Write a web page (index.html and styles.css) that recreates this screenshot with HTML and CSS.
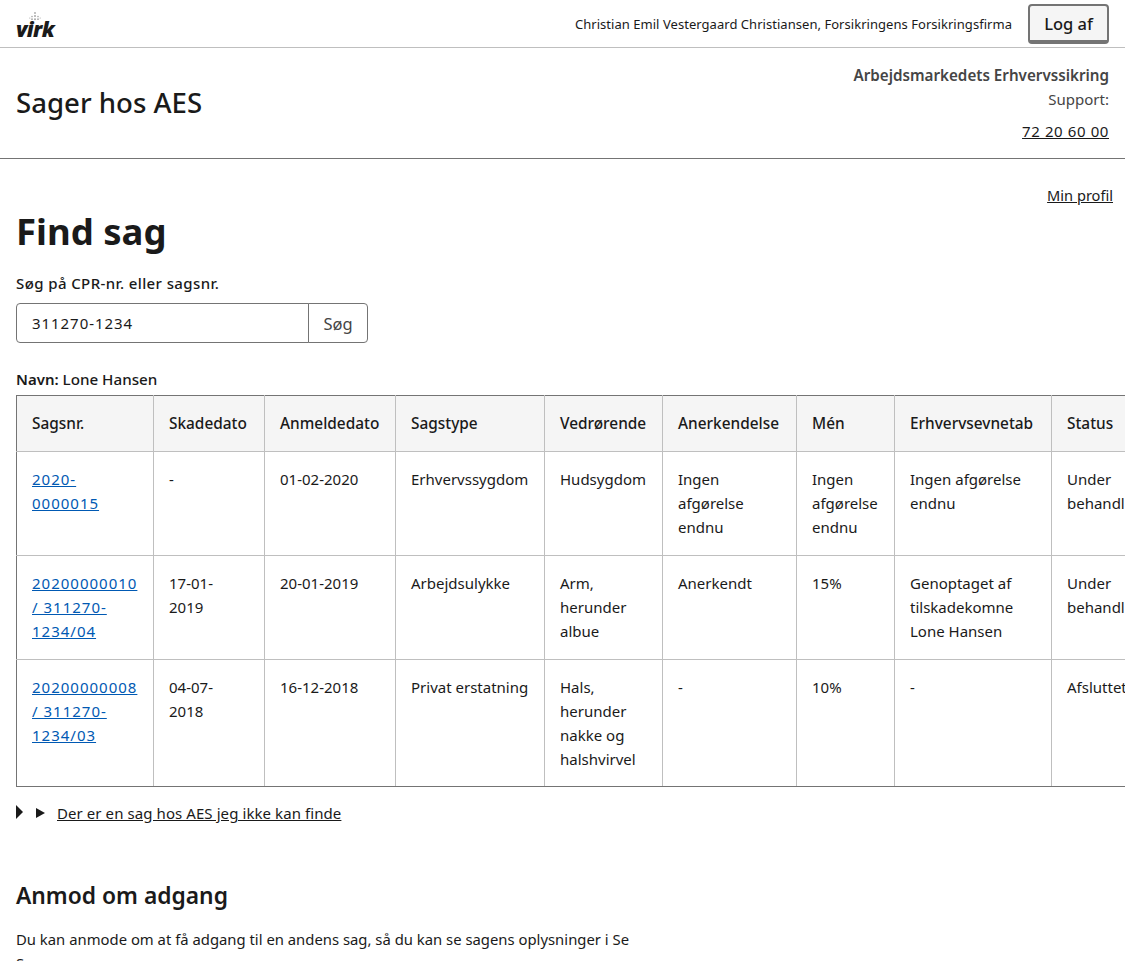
FILE: index.html
```html
<!DOCTYPE html>
<html lang="da">
<head>
    <meta charset="UTF-8">
    <title>Sager hos AES</title>
    <link rel="stylesheet" href="styles.css">
</head>
<body>
    <!-- topbar -->
    <div class="topbar">
        <div class="logo">
            <svg class="crown" width="12" height="9" viewBox="0 0 12 9">
                <circle cx="6" cy="1" r="0.9"/>
                <circle cx="6" cy="4" r="1"/>
                <circle cx="6" cy="7.2" r="1"/>
                <circle cx="3" cy="4.6" r="0.8"/>
                <circle cx="9" cy="4.6" r="0.8"/>
                <circle cx="3" cy="7.2" r="0.9"/>
                <circle cx="9" cy="7.2" r="0.9"/>
                <circle cx="0.8" cy="6" r="0.6"/>
                <circle cx="11.2" cy="6" r="0.6"/>
            </svg>
            <span class="logo-text">virk</span>
        </div>
        <div class="user">
            <span class="user-name">Christian Emil Vestergaard Christiansen, Forsikringens Forsikringsfirma</span>
            <button class="logout">Log af</button>
        </div>
    </div>

    <!-- sidehoved -->
    <div class="site-header">
        <div class="site-title">Sager hos AES</div>
        <div class="support">
            <div class="support-org">Arbejdsmarkedets Erhvervssikring</div>
            <div class="support-label">Support:</div>
            <div class="support-phone"><a href="#">72 20 60 00</a></div>
        </div>
    </div>

    <div class="content">
        <div class="profile-row"><a href="#">Min profil</a></div>
        <h1>Find sag</h1>

        <label class="search-label" for="search">Søg på CPR-nr. eller sagsnr.</label>
        <div class="search">
            <input id="search" class="search-input" type="text" value="311270-1234">
            <button class="search-btn">Søg</button>
        </div>

        <div class="name-line"><b>Navn:</b> Lone Hansen</div>

        <table class="cases">
            <colgroup>
                <col class="c1"><col class="c2"><col class="c3"><col class="c4"><col class="c5">
                <col class="c6"><col class="c7"><col class="c8"><col class="c9">
            </colgroup>
            <thead>
                <tr>
                    <th>Sagsnr.</th>
                    <th>Skadedato</th>
                    <th>Anmeldedato</th>
                    <th>Sagstype</th>
                    <th>Vedrørende</th>
                    <th>Anerkendelse</th>
                    <th>Mén</th>
                    <th>Erhvervsevnetab</th>
                    <th>Status</th>
                </tr>
            </thead>
            <tbody>
                <tr>
                    <td><a class="case-link" href="#">2020-<br>0000015</a></td>
                    <td>-</td>
                    <td>01-02-2020</td>
                    <td>Erhvervssygdom</td>
                    <td>Hudsygdom</td>
                    <td>Ingen<br>afgørelse<br>endnu</td>
                    <td>Ingen<br>afgørelse<br>endnu</td>
                    <td>Ingen afgørelse<br>endnu</td>
                    <td>Under<br>behandling</td>
                </tr>
                <tr>
                    <td><a class="case-link" href="#">20200000010<br>/ 311270-<br>1234/04</a></td>
                    <td>17-01-<br>2019</td>
                    <td>20-01-2019</td>
                    <td>Arbejdsulykke</td>
                    <td>Arm,<br>herunder<br>albue</td>
                    <td>Anerkendt</td>
                    <td>15%</td>
                    <td>Genoptaget af<br>tilskadekomne<br>Lone Hansen</td>
                    <td>Under<br>behandling</td>
                </tr>
                <tr>
                    <td><a class="case-link" href="#">20200000008<br>/ 311270-<br>1234/03</a></td>
                    <td>04-07-<br>2018</td>
                    <td>16-12-2018</td>
                    <td>Privat erstatning</td>
                    <td>Hals,<br>herunder<br>nakke og<br>halshvirvel</td>
                    <td>-</td>
                    <td>10%</td>
                    <td>-</td>
                    <td>Afsluttet</td>
                </tr>
            </tbody>
        </table>

        <div class="missing">
            <span class="tri tri-big"></span>
            <span class="tri tri-small"></span>
            <a href="#">Der er en sag hos AES jeg ikke kan finde</a>
        </div>

        <h2>Anmod om adgang</h2>
        <p class="intro">Du kan anmode om at få adgang til en andens sag, så du kan se sagens oplysninger i Se Sag.</p>
    </div>
</body>
</html>
```

FILE: styles.css
```css
*{
    box-sizing: border-box;
}
html, body{
    height: 961px;
    overflow: hidden;
}
body{
    margin: 0;
    font-family: "Noto Sans", Roboto, sans-serif;
    font-size: 16px;
    line-height: 24px;
    color: #1a1a1a;
    background-color: #fff;
}
a{
    color: inherit;
}

/* topbar */
.topbar{
    height: 48px;
    padding: 4px 16px 0;
    border-bottom: 1px solid #bfbfbf;
    display: flex;
    justify-content: space-between;
}
.logo{
    display: flex;
    flex-direction: column;
    align-items: center;
    width: 38px;
    padding-top: 8px;
}
.crown{
    fill: #a8a8a8;
    flex: none;
}
.logo-text{
    font-family: "Open Sans", sans-serif;
    font-size: 21px;
    font-weight: 800;
    font-style: italic;
    line-height: 16px;
    letter-spacing: -0.6px;
    color: #1a1a1a;
}
.user{
    display: flex;
    align-items: flex-start;
    gap: 16px;
}
.user-name{
    font-size: 13px;
    line-height: 40px;
    letter-spacing: 0.04px;
}
.logout{
    width: 81px;
    height: 40px;
    font-family: inherit;
    font-size: 16.5px;
    font-weight: 500;
    color: #1a1a1a;
    background-color: #f5f5f5;
    border: 2px solid #747474;
    border-bottom-width: 4px;
    border-radius: 4px;
    padding: 0;
}

/* sidehoved */
.site-header{
    height: 111px;
    padding: 15px 16px 0;
    border-bottom: 1px solid #747474;
    display: flex;
    justify-content: space-between;
}
.site-title{
    font-size: 27.6px;
    font-weight: 500;
    line-height: 79px;
}
.support{
    text-align: right;
    font-size: 15px;
    color: #454545;
}
.support-org{
    font-size: 15.2px;
    font-weight: 600;
}
.support-label{
    line-height: 24px;
}
.support-phone{
    margin-top: 8px;
    line-height: 24px;
    letter-spacing: 0.6px;
    color: #1a1a1a;
}

/* indhold */
.content{
    padding: 24px 12px 0 16px;
}
.profile-row{
    text-align: right;
    font-size: 14.6px;
}
h1{
    margin: 0;
    font-size: 36.5px;
    font-weight: 700;
    line-height: 48px;
}
.search-label{
    display: block;
    margin-top: 16px;
    font-size: 15px;
    font-weight: 500;
    letter-spacing: 0.4px;
}
.search{
    display: flex;
    width: 352px;
    height: 40px;
    margin-top: 8px;
}
.search-input{
    width: 293px;
    height: 40px;
    padding: 0 15px;
    font-family: inherit;
    font-size: 15px;
    letter-spacing: 0.95px;
    color: #1a1a1a;
    border: 1px solid #747474;
    border-radius: 4px 0 0 4px;
}
.search-btn{
    flex: 1;
    margin-left: -1px;
    padding: 0;
    font-family: inherit;
    font-size: 16.5px;
    color: #454545;
    background-color: #fff;
    border: 1px solid #747474;
    border-radius: 0 4px 4px 0;
}
.name-line{
    margin-top: 24px;
    margin-bottom: 4px;
    font-size: 15.2px;
    font-weight: 500;
}
.name-line b{
    font-size: 15px;
    font-weight: 600;
}

/* tabel */
.cases{
    table-layout: fixed;
    width: 1230px;
    border-collapse: collapse;
    font-size: 15px;
}
.c1{ width: 137px; }
.c2{ width: 111px; }
.c3{ width: 131px; }
.c4{ width: 149px; }
.c5{ width: 118px; }
.c6{ width: 134px; }
.c7{ width: 98px; }
.c8{ width: 157px; }
.c9{ width: 195px; }
.cases th, .cases td{
    border: 1px solid #bfbfbf;
    padding: 15px 15px 16px;
    text-align: left;
    vertical-align: top;
    overflow: hidden;
    white-space: nowrap;
}
.cases th{
    padding: 16px 15px 15px;
    background-color: #f5f5f5;
    font-size: 15.4px;
    font-weight: 500;
    border-top-color: #747474;
}
.cases th:first-child, .cases td:first-child{
    border-left-color: #747474;
}
.cases tbody tr:last-child td{
    padding-bottom: 15px;
    border-bottom-color: #747474;
}
.case-link{
    color: #0059b3;
    letter-spacing: 1px;
}

/* fold ud */
.missing{
    display: flex;
    align-items: center;
    margin-top: 14px;
    font-size: 15px;
    letter-spacing: 0.08px;
}
.missing a{
    margin-left: 12px;
}
.tri{
    display: block;
    width: 0;
    height: 0;
    border-style: solid;
    border-color: transparent transparent transparent #1a1a1a;
}
.tri-big{
    border-width: 7px 0 7px 7px;
    margin-top: -2px;
}
.tri-small{
    border-width: 5px 0 5px 9px;
    margin-left: 13px;
}
h2{
    margin: 53px 0 0;
    font-size: 22.8px;
    font-weight: 600;
    line-height: 36px;
}
.intro{
    width: 630px;
    margin: 13px 0 0;
    font-size: 14.85px;
}
```
